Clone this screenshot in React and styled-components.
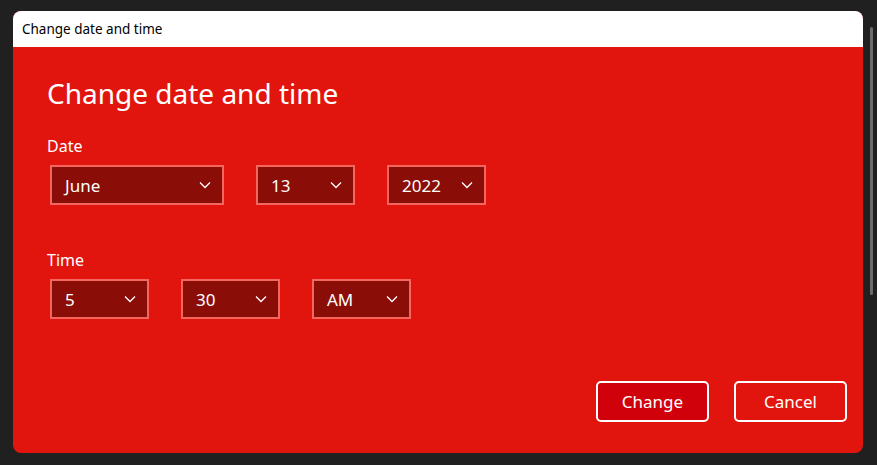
import styled, { createGlobalStyle } from "styled-components"

const Global = createGlobalStyle`
  body { margin: 0; background: #202020; font-family: "Segoe UI", "Noto Sans", sans-serif; }
`

const Page = styled.div`
  height: 465px;
  display: flex;
  padding: 11px 0 0 13px;
  box-sizing: border-box;
  gap: 7px;
`
const Window = styled.div`
  width: 850px;
  height: 442px;
  border-radius: 8px;
  overflow: hidden;
  background: #e2150e;
  display: flex;
  flex-direction: column;
`
const TitleBar = styled.div`
  height: 36px;
  background: #fff;
  color: #000;
  font-size: 13.5px;
  display: flex;
  align-items: center;
  padding-left: 9px;
`
const Body = styled.div`
  flex: 1;
  padding: 26px 16px 31px 34px;
  display: flex;
  flex-direction: column;
  color: #fff;
`
const Heading = styled.h1`
  margin: 0 0 22px;
  font-size: 28px;
  font-weight: 400;
  line-height: 40px;
`
const Label = styled.div`
  font-size: 16px;
  line-height: 22px;
  margin-bottom: 8px;
`
const Row = styled.div`
  display: flex;
  gap: 32px;
  padding-left: 3px;
  margin-bottom: ${({ $mb }) => $mb}px;
`
const Select = styled.div`
  width: ${({ $w }) => $w}px;
  height: 40px;
  box-sizing: border-box;
  border: 2px solid #f4675f;
  background: #8a0d07;
  display: flex;
  align-items: center;
  justify-content: space-between;
  padding: 0 11px 0 13px;
  font-size: 17px;
`
const Footer = styled.div`
  margin-top: auto;
  display: flex;
  justify-content: flex-end;
  gap: 25px;
`
const Button = styled.button`
  width: 113px;
  height: 41px;
  border: 2px solid #fff;
  border-radius: 5px;
  background: ${({ $primary }) => ($primary ? "#d0010a" : "transparent")};
  color: #fff;
  font-family: inherit;
  font-size: 17px;
`
const Scroll = styled.div`
  width: 3px;
  height: 268px;
  margin-top: 16px;
  border-radius: 2px;
  background: #6c6c6c;
`

const Chevron = () => (
  <svg width="12" height="8" viewBox="0 0 12 8" fill="none" stroke="#fff" strokeWidth="1.3">
    <path d="M1 1.5l5 5 5-5" />
  </svg>
)

const Drop = ({ w, value }) => (
  <Select $w={w}>
    <span>{value}</span>
    <Chevron />
  </Select>
)

export default function App() {
  return (
    <Page>
      <Global />
      <Window>
        <TitleBar>Change date and time</TitleBar>
        <Body>
          <Heading>Change date and time</Heading>
          <Label>Date</Label>
          <Row $mb={44}>
            <Drop w={174} value="June" />
            <Drop w={99} value="13" />
            <Drop w={99} value="2022" />
          </Row>
          <Label>Time</Label>
          <Row $mb={0}>
            <Drop w={99} value="5" />
            <Drop w={99} value="30" />
            <Drop w={99} value="AM" />
          </Row>
          <Footer>
            <Button $primary>Change</Button>
            <Button>Cancel</Button>
          </Footer>
        </Body>
      </Window>
      <Scroll />
    </Page>
  )
}
